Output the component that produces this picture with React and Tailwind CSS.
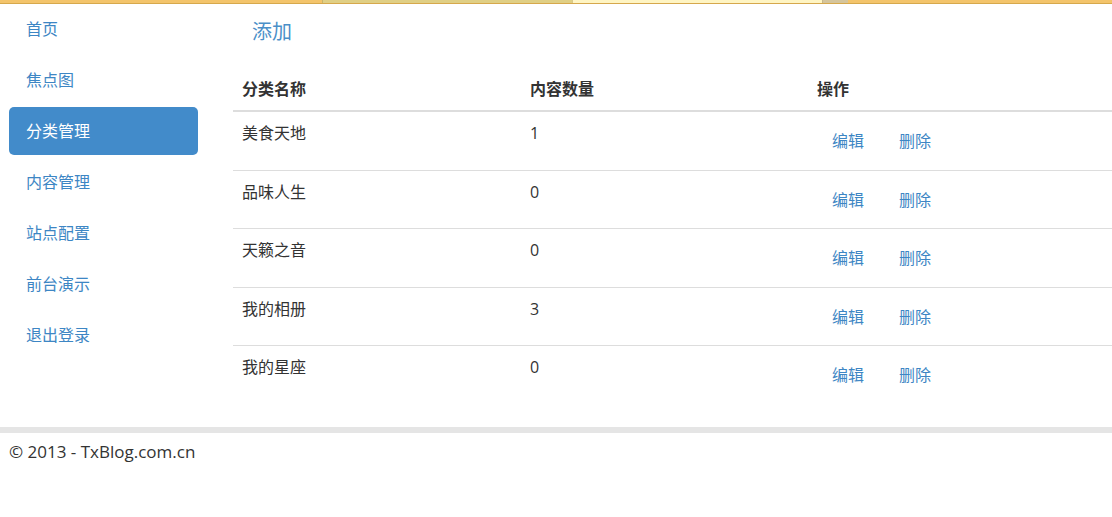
import React from 'react';

const navItems = ['首页', '焦点图', '分类管理', '内容管理', '站点配置', '前台演示', '退出登录'];

const rows = [
  { name: '美食天地', count: 1 },
  { name: '品味人生', count: 0 },
  { name: '天籁之音', count: 0 },
  { name: '我的相册', count: 3 },
  { name: '我的星座', count: 0 },
];

export default function App() {
  return (
    <div
      className="w-[1112px] min-h-[517px] bg-white text-[#333] text-[16px]"
      style={{ fontFamily: '"Open Sans", "Noto Sans CJK SC", sans-serif' }}
    >
      {/* Top strip */}
      <div className="flex h-[4px] border-b border-[#d6a84c]">
        <div className="w-[322px] bg-[#f3c46b]" />
        <div className="w-[250px] bg-[#e0cf85] border-l border-[#c9b46a]" />
        <div className="w-[250px] bg-[#fff5c3] border-l border-[#d9c98a]" />
        <div className="w-[26px] bg-[#d5c59c] border-l border-[#c7b789]" />
        <div className="flex-1 bg-[#f3c46b]" />
      </div>

      <div className="flex">
        {/* Sidebar */}
        <div className="w-[198px] pl-[9px] pt-[1px] flex flex-col gap-[3px]">
          {navItems.map((item) => (
            <a
              key={item}
              className={`h-[48px] flex items-center px-[17px] rounded-[5px] leading-[24px] ${
                item === '分类管理' ? 'bg-[#428bca] text-white' : 'text-[#3d86c4]'
              }`}
            >
              {item}
            </a>
          ))}
        </div>

        {/* Main */}
        <div className="flex-1 ml-[35px]">
          <div className="mt-[14px] pl-[19px] text-[20px] leading-[28px] text-[#4a8fc8]">添加</div>

          <div className="mt-[31px] grid grid-cols-[288px_287px_1fr] border-b-2 border-[#dddddd] pb-[9px] font-bold leading-[24px]">
            <div className="pl-[9px]">分类名称</div>
            <div className="pl-[9px]">内容数量</div>
            <div className="pl-[9px]">操作</div>
          </div>

          {rows.map((row, i) => (
            <div
              key={row.name}
              className={`grid grid-cols-[288px_287px_1fr] h-[58.5px] leading-[24px] ${
                i < rows.length - 1 ? 'border-b border-[#dddddd]' : ''
              }`}
            >
              <div className="pl-[9px] pt-[9px]">{row.name}</div>
              <div className="pl-[9px] pt-[9px]">{row.count}</div>
              <div className="pl-[9px] pt-[17px] flex items-start gap-[5px]">
                <button className="px-[15px] leading-[24px] text-[#3d86c4]">编辑</button>
                <button className="px-[15px] leading-[24px] text-[#3d86c4]">删除</button>
              </div>
            </div>
          ))}
        </div>
      </div>

      {/* Footer */}
      <div className="mt-[22px] border-t-[6px] border-[#e5e5e5] pt-[7px] pl-[9px] leading-[24px] text-[17px] text-[#333]">
        © 2013 - TxBlog.com.cn
      </div>
    </div>
  );
}
